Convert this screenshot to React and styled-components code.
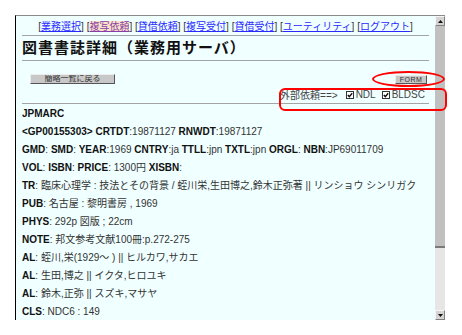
import React from 'react';
import styled, { createGlobalStyle } from 'styled-components';

const GlobalStyle = createGlobalStyle`
  html, body {
    margin: 0;
    padding: 0;
    background: #ffffff;
  }
  body {
    font-family: 'Liberation Sans', 'Noto Sans CJK JP', sans-serif;
    color: #111;
  }
`

const Page = styled.div`
  padding: 15px 0 0 15px;
`
const Window = styled.div`
  position: relative;
  width: 429px;
  height: 304px;
  display: flex;
  border-top: 1px solid #8a8a8a;
  border-left: 1px solid #000;
`
const Content = styled.div`
  flex: 1;
  background: #f0ffff;
  padding: 0 6px;
  overflow: hidden;
`
const Nav = styled.div`
  margin-top: 5px;
  text-align: center;
  font-size: 10px;
  line-height: 12px;
  color: #333;
  white-space: nowrap;
`
const NavLink = styled.a`
  color: ${(props) => (props.active ? '#8a3fa8' : '#2a2aff')};
  background: ${(props) => (props.active ? '#fbe3c8' : 'transparent')};
  text-decoration: underline;
`
const Rule = styled.div`
  height: 1px;
  background: #a4a4a4;
  margin-top: ${(props) => props.top}px;
`
const Title = styled.h1`
  margin: 4px 0 0 0;
  font-size: 15px;
  line-height: 16px;
  letter-spacing: 1px;
  font-weight: bold;
  color: #111;
`
const ButtonRow = styled.div`
  display: flex;
  align-items: flex-end;
  justify-content: space-between;
  height: 10px;
  margin-top: 13px;
  padding: 0 2px 0 8px;
`
const GrayButton = styled.div`
  box-sizing: border-box;
  width: ${(props) => props.w}px;
  height: ${(props) => props.h}px;
  background: #c8c8c8;
  border-top: 1px solid #ececec;
  border-left: 1px solid #ececec;
  border-right: 1px solid #555;
  border-bottom: 1px solid #555;
  font-size: ${(props) => props.fs}px;
  line-height: ${(props) => props.h - 2}px;
  text-align: center;
  color: #333;
  letter-spacing: ${(props) => props.ls || 0}px;
  white-space: nowrap;
  overflow: hidden;
`
const ExternalRow = styled.div`
  display: flex;
  justify-content: flex-end;
  align-items: center;
  gap: 5px;
  margin-top: 4px;
  padding-right: 4px;
  height: 13px;
  font-size: 10px;
  color: #444;
  white-space: nowrap;
`
const Check = styled.span`
  display: inline-flex;
  align-items: center;
  gap: 2px;
  margin-left: ${(props) => props.gap}px;
`
const Record = styled.div`
  margin-top: 1px;
`
const Line = styled.div`
  font-size: 10px;
  line-height: 18px;
  white-space: nowrap;
  color: #333;
`
const Label = styled.b`
  font-weight: bold;
  color: #111;
`
const Scrollbar = styled.div`
  width: 10px;
  display: flex;
  flex-direction: column;
  background: #e4e4e4;
`
const Arrow = styled.div`
  box-sizing: border-box;
  height: 10px;
  background: #d4d4d4;
  border-top: 1px solid #f4f4f4;
  border-left: 1px solid #f4f4f4;
  border-right: 1px solid #808080;
  border-bottom: 1px solid #808080;
  display: flex;
  align-items: center;
  justify-content: center;
`
const Thumb = styled.div`
  box-sizing: border-box;
  height: 222px;
  background: #c0c0c0;
  border-bottom: 2px solid #7a7a7a;
`
const Track = styled.div`
  flex: 1;
  background: #e6e6e6;
`
const Ellipse = styled.div`
  position: absolute;
  left: 356px;
  top: 55px;
  width: 73px;
  height: 16px;
  border: 2px solid #ff0000;
  border-radius: 50%;
  box-sizing: border-box;
`
const Callout = styled.div`
  position: absolute;
  left: 263px;
  top: 72px;
  width: 168px;
  height: 23px;
  border: 2px solid #ff0000;
  border-radius: 6px;
  box-sizing: border-box;
`

const CheckBox = () => (
  <svg width="8" height="8" viewBox="0 0 8 8">
    <rect x="0.5" y="0.5" width="7" height="7" fill="#fff" stroke="#333" />
    <path d="M1.8 4 L3.3 5.6 L6.2 2.2" fill="none" stroke="#111" strokeWidth="1.4" />
  </svg>
)

const Tri = ({ down }) => (
  <svg width="5" height="3" viewBox="0 0 5 3">
    <path d={down ? 'M0 0 L5 0 L2.5 3 Z' : 'M0 3 L5 3 L2.5 0 Z'} fill="#111" />
  </svg>
)

const links = ['業務選択', '複写依頼', '貸借依頼', '複写受付', '貸借受付', 'ユーティリティ', 'ログアウト']

const records = [
  [['JPMARC', '']],
  [['<GP00155303> ', ''], ['CRTDT', ':19871127 '], ['RNWDT', ':19871127']],
  [['GMD', ': '], ['SMD', ': '], ['YEAR', ':1969 '], ['CNTRY', ':ja '], ['TTLL', ':jpn '], ['TXTL', ':jpn '], ['ORGL', ': '], ['NBN', ':JP69011709']],
  [['VOL', ': '], ['ISBN', ': '], ['PRICE', ': 1300円 '], ['XISBN', ':']],
  [['TR', ': 臨床心理学 : 技法とその背景 / 蛭川栄,生田博之,鈴木正弥著 || リンショウ シンリガク']],
  [['PUB', ': 名古屋 : 黎明書房 , 1969']],
  [['PHYS', ': 292p 図版 ; 22cm']],
  [['NOTE', ': 邦文参考文献100冊:p.272-275']],
  [['AL', ': 蛭川,栄(1929～ ) || ヒルカワ,サカエ']],
  [['AL', ': 生田,博之 || イクタ,ヒロユキ']],
  [['AL', ': 鈴木,正弥 || スズキ,マサヤ']],
  [['CLS', ': NDC6 : 149']],
]

const App = () => {
  return (
    <>
      <GlobalStyle />
      <Page>
        <Window>
          <Content>
            <Nav>
              {links.map((l, i) => (
                <React.Fragment key={l}>
                  {i > 0 && ' '}[<NavLink active={i === 1}>{l}</NavLink>]
                </React.Fragment>
              ))}
            </Nav>
            <Rule top={2} />
            <Title>図書書誌詳細（業務用サーバ）</Title>
            <Rule top={4} />
            <ButtonRow>
              <GrayButton w={85} h={10} fs={8}>簡略一覧に戻る</GrayButton>
              <GrayButton w={32} h={9} fs={7} ls={0.5}>FORM</GrayButton>
            </ButtonRow>
            <ExternalRow>
              <span>外部依頼==&gt;</span>
              <Check gap={3}><CheckBox />NDL</Check>
              <Check gap={1}><CheckBox />BLDSC</Check>
            </ExternalRow>
            <Rule top={2} />
            <Record>
              {records.map((parts, i) => (
                <Line key={i}>
                  {parts.map(([label, value], j) => (
                    <React.Fragment key={j}>
                      <Label>{label}</Label>
                      {value}
                    </React.Fragment>
                  ))}
                </Line>
              ))}
            </Record>
          </Content>
          <Scrollbar>
            <Arrow><Tri /></Arrow>
            <Thumb />
            <Track />
            <Arrow><Tri down /></Arrow>
          </Scrollbar>
          <Ellipse />
          <Callout />
        </Window>
      </Page>
    </>
  );
}

export default App;
